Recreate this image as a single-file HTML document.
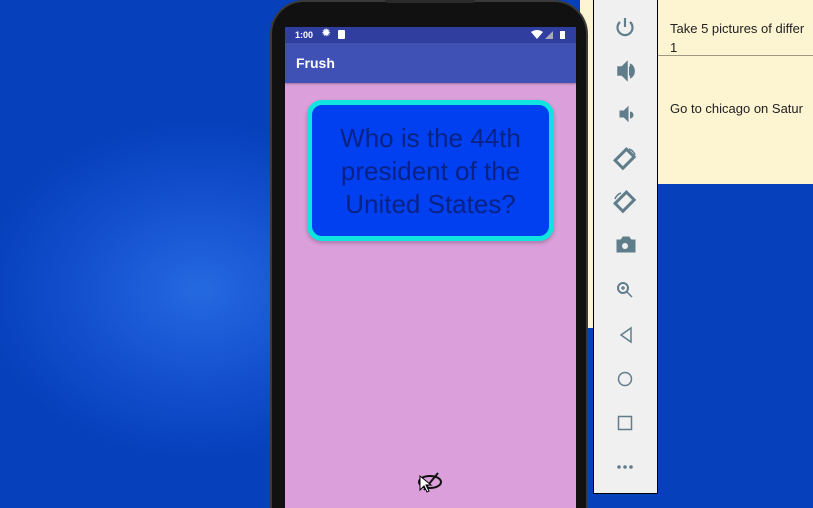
<!DOCTYPE html>
<html><head><meta charset="utf-8"><style>
*{margin:0;padding:0;box-sizing:border-box}
html,body{width:813px;height:508px;overflow:hidden}
body{position:relative;font-family:"Liberation Sans",sans-serif;
background:radial-gradient(ellipse 220px 170px at 200px 290px,#2569e0 0%,#1552d0 50%,#0640bb 100%);}
.abs{position:absolute}
#clip{position:absolute;left:0;top:0;width:813px;height:508px;overflow:hidden}
</style></head><body><div id="clip">
<!-- yellow note behind -->
<div class="abs" style="left:580px;top:0;width:233px;height:184px;background:#fdf4d2"></div>
<div class="abs" style="left:580px;top:184px;width:14px;height:144px;background:#fdf4d2"></div>
<div class="abs" style="left:657px;top:55px;width:156px;height:1px;background:#a09880"></div>
<div class="abs" style="left:670px;top:19px;font-size:13px;color:#222;line-height:19px;white-space:nowrap">Take 5 pictures of differ<br>1</div>
<div class="abs" style="left:670px;top:101px;font-size:13px;color:#222;white-space:nowrap">Go to chicago on Satur</div>
<!-- phone -->
<div class="abs" style="left:270px;top:0;width:318px;height:508px;background:#111;border-radius:34px 34px 0 0;border:2px solid #3a3a3a;border-bottom:none"></div>
<div class="abs" style="left:385px;top:0;width:90px;height:3px;background:#2a2a2a;border-radius:0 0 6px 6px"></div>
<div class="abs" style="left:285px;top:27px;width:291px;height:481px;background:#dba0db"></div>
<div class="abs" style="left:285px;top:27px;width:291px;height:16px;background:#303f9f;color:#fff;font-size:9px;font-weight:bold">
<span class="abs" style="left:10px;top:3px">1:00</span>
<span class="abs" style="left:37px;top:1px;font-size:10px">✹</span>
<span class="abs" style="left:53px;top:3px;width:7px;height:9px;background:#fff;border-radius:1px"></span>
<svg class="abs" style="left:246px;top:3px" width="40" height="10"><path d="M0 2 Q6 -2 12 2 L6 9Z" fill="#fff"/><path d="M22 1 L22 9 L14 9Z" fill="#aab"/><rect x="29" y="1" width="5" height="8" fill="#fff"/></svg>
</div>
<div class="abs" style="left:285px;top:43px;width:291px;height:40px;background:#3f51b5;box-shadow:0 1px 2px rgba(0,0,0,.3)"></div>
<div class="abs" style="left:296px;top:55px;color:#fff;font-size:14px;font-weight:bold">Frush</div>
<div class="abs" style="left:307px;top:100px;width:247px;height:141px;background:#0040f0;border:5px solid #10e4e0;border-radius:15px;box-shadow:0 2px 4px rgba(0,0,0,.25);color:#0a2286;font-size:26px;line-height:33px;text-align:center;padding-top:17px">Who is the 44th<br>president of the<br>United States?</div>
<svg class="abs" style="left:416px;top:470px" width="30" height="26"><ellipse cx="14" cy="12" rx="11" ry="6" fill="none" stroke="#111" stroke-width="2"/><line x1="8" y1="20" x2="22" y2="3" stroke="#111" stroke-width="2"/><path d="M4 6 L4 20 L8 16 L11 22 L13 21 L10 15 L15 15Z" fill="#fff" stroke="#000" stroke-width="1"/></svg>
<!-- toolbar -->
<div class="abs" style="left:593px;top:-1px;width:65px;height:495px;background:#f0f0f0;border:1px solid #000"></div>
<svg class="abs" style="left:593px;top:0" width="65" height="495" fill="#607d8b" stroke="#607d8b">
<g fill="none" stroke-width="2.2"><path d="M32 18 v9"/><path d="M27 22 A7.5 7.5 0 1 0 37 22"/></g>
<path d="M25 67 h4 l5 -5 v18 l-5 -5 h-4z M37 64 a8 8 0 0 1 0 14 M36 67 a4 4 0 0 1 0 8" stroke-width="1.5"/>
<path d="M27 111 h4 l4 -4 v14 l-4 -4 h-4z M37 112 a3 3 0 0 1 0 6" stroke-width="1"/>
<g fill="none" stroke-width="3"><rect x="24" y="153" width="16" height="11" transform="rotate(-45 32 159)"/><rect x="24" y="196" width="16" height="11" transform="rotate(-45 32 202)"/></g>
<g fill="none" stroke-width="1.5"><path d="M36 149 a10 10 0 0 1 6 6"/><path d="M22 199 a10 10 0 0 1 6 -6"/></g>
<path d="M24 240 h4 l2 -3 h6 l2 3 h4 v12 h-18z"/><circle cx="32" cy="246" r="3" fill="#f0f0f0" stroke="none"/>
<g fill="none" stroke-width="2"><circle cx="30" cy="288" r="5"/><path d="M34 292 l5 5 M28 288 h4 M30 286 v4" stroke-width="1.5"/>
<path d="M38 328 v14 l-10 -7z" stroke-width="1.5"/><circle cx="32" cy="379" r="6.5" stroke-width="1.5"/><rect x="25.5" y="416.5" width="13" height="13" stroke-width="1.5"/></g>
<circle cx="26" cy="467" r="1.8" stroke="none"/><circle cx="32" cy="467" r="1.8" stroke="none"/><circle cx="38" cy="467" r="1.8" stroke="none"/>
</svg>
</div></body></html>
